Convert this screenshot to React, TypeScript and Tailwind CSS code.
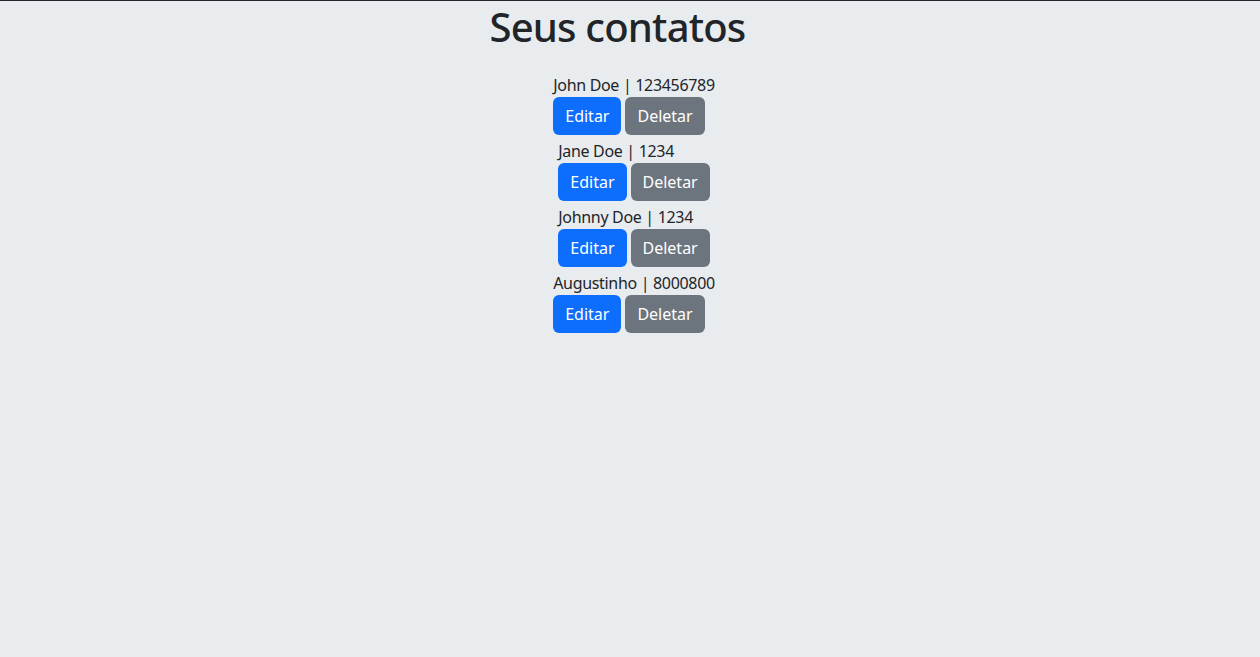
const contacts = [
  { name: "John Doe", phone: "123456789" },
  { name: "Jane Doe", phone: "1234" },
  { name: "Johnny Doe", phone: "1234" },
  { name: "Augustinho", phone: "8000800" },
];

export default function App() {
  return (
    <div
      className="min-h-screen border-t border-[#212529] bg-[#e9ecef] text-[#212529]"
      style={{ fontFamily: '"Noto Sans", "Open Sans", sans-serif' }}
    >
      <div className="flex flex-col items-center pt-[2px]">
        <h1 className="mr-[25px] text-[40px] font-medium leading-[48px] tracking-[-0.02em]">
          Seus contatos
        </h1>
        <ul className="mt-[22px] ml-2 flex flex-col items-center">
          {contacts.map((c) => (
            <li key={c.name} className="mb-1 flex flex-col items-start">
              <span className="text-base leading-6 tracking-[-0.02em]">
                {c.name} | {c.phone}
              </span>
              <div className="flex gap-1">
                <button className="h-[38px] rounded-md bg-[#0d6efd] px-3 text-base text-white">
                  Editar
                </button>
                <button className="h-[38px] rounded-md bg-[#6c757d] px-3 text-base text-white">
                  Deletar
                </button>
              </div>
            </li>
          ))}
        </ul>
      </div>
    </div>
  );
}
